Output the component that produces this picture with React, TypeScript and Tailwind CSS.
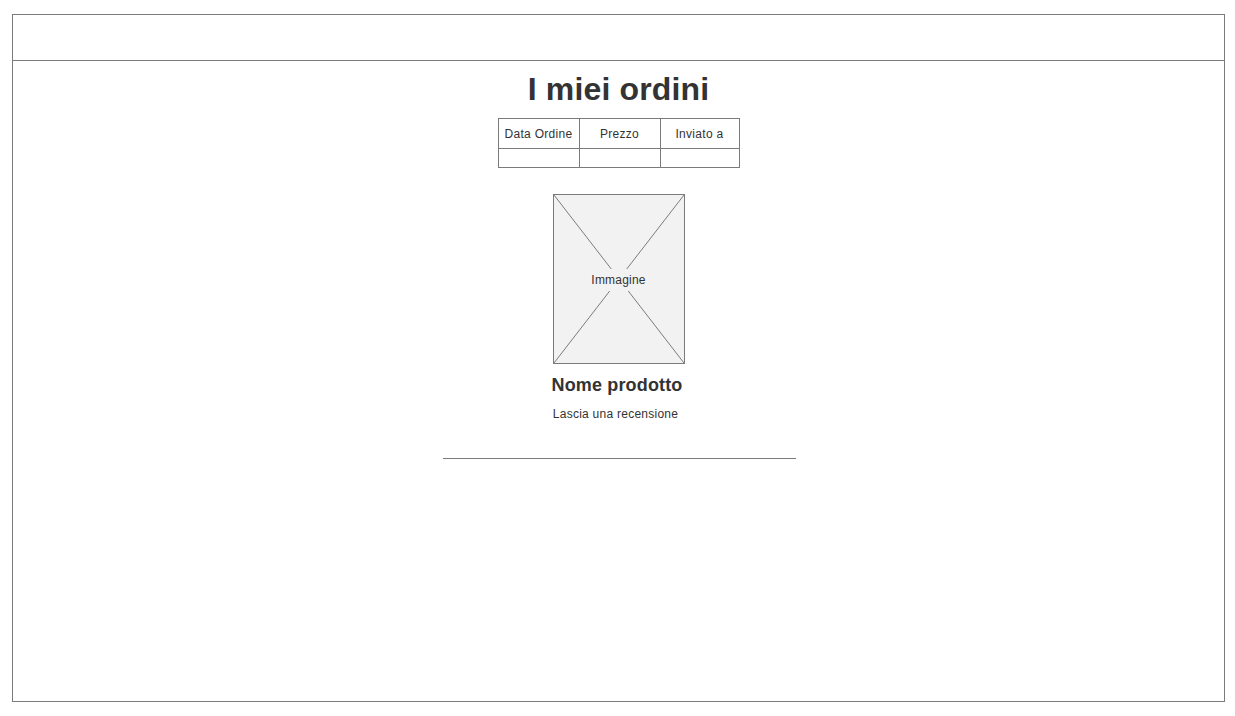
import React from "react";

const columns = ["Data Ordine", "Prezzo", "Inviato a"];

function ImagePlaceholder() {
  return (
    <div className="relative mt-[26px] flex h-[170px] w-[132px] items-center justify-center border border-[#7b7b7b] bg-[#f2f2f2]">
      {/* crossed placeholder lines */}
      <svg
        className="absolute inset-0 h-full w-full"
        viewBox="0 0 130 168"
        preserveAspectRatio="none"
      >
        <line x1="0" y1="0" x2="130" y2="168" stroke="#7b7b7b" strokeWidth="1" vectorEffect="non-scaling-stroke" />
        <line x1="130" y1="0" x2="0" y2="168" stroke="#7b7b7b" strokeWidth="1" vectorEffect="non-scaling-stroke" />
      </svg>
      <span className="relative mt-[2px] bg-[#f2f2f2] px-[2px] py-[3px] text-[12px] leading-[16px] tracking-[0.2px] text-[#333]">
        Immagine
      </span>
    </div>
  );
}

export default function App() {
  return (
    <div className="min-h-[716px] bg-white pl-[12px] pt-[14px] font-['Liberation_Sans',Arial,sans-serif] text-[#333]">
      <div className="flex h-[688px] w-[1213px] flex-col border border-[#7b7b7b]">
        {/* Header bar */}
        <div className="h-[46px] shrink-0 border-b border-[#7b7b7b]" />

        {/* Content */}
        <div className="flex flex-col items-center">
          <h1 className="mt-[10px] text-[32px] font-bold leading-[37px] tracking-[0.15px]">I miei ordini</h1>

          {/* Orders table */}
          <div className="mt-[10px] w-[242px] border border-[#7b7b7b] text-[12px] tracking-[0.3px]">
            <div className="grid grid-cols-[81px_81px_78px] border-b border-[#7b7b7b]">
              {columns.map((c, i) => (
                <div
                  key={c}
                  className={
                    "flex h-[29px] items-center justify-center whitespace-nowrap " +
                    (i < columns.length - 1 ? "border-r border-[#7b7b7b]" : "")
                  }
                >
                  {c}
                </div>
              ))}
            </div>
            <div className="grid grid-cols-[81px_81px_78px]">
              <div className="h-[18px] border-r border-[#7b7b7b]" />
              <div className="h-[18px] border-r border-[#7b7b7b]" />
              <div className="h-[18px]" />
            </div>
          </div>

          <ImagePlaceholder />

          <h2 className="mt-[10px] pr-[3px] text-[18px] font-bold leading-[22px] tracking-[0.15px]">Nome prodotto</h2>
          <p className="mt-[10px] pr-[6px] text-[12px] leading-[16px] tracking-[0.25px]">Lascia una recensione</p>

          <div className="ml-[2px] mt-[36px] h-px w-[353px] bg-[#7b7b7b]" />
        </div>
      </div>
    </div>
  );
}
